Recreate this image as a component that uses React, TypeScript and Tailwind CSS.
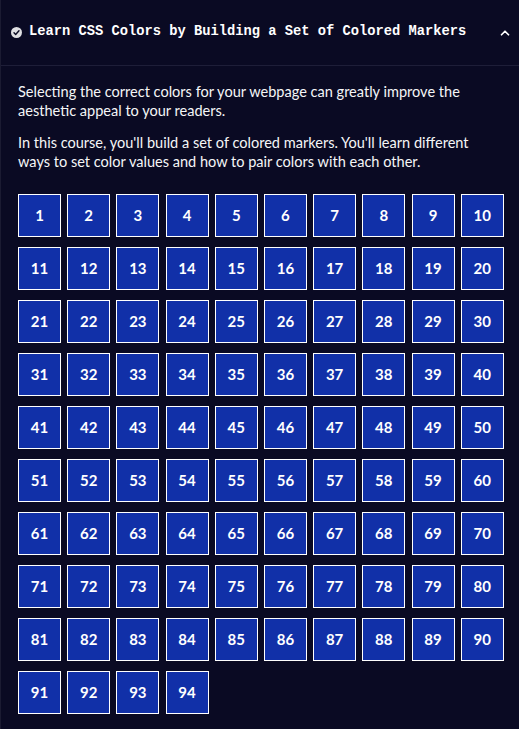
import { ChevronUp } from 'lucide-react'

const steps = Array.from({ length: 94 }, (_, i) => i + 1)

function CheckCircle() {
  return (
    <svg width="11" height="11" viewBox="0 0 20 20" className="shrink-0">
      <circle cx="10" cy="10" r="10" fill="#dfdfe2" />
      <path d="M5.5 10.5l3 3 6-6.5" fill="none" stroke="#0a0a23" strokeWidth="2.6" strokeLinecap="round" strokeLinejoin="round" />
    </svg>
  )
}

export default function App() {
  return (
    <div className="bg-[#0a0a23] w-[519px] h-[729px] overflow-hidden border-l border-[#1b1b32] text-[#f5f6f7]">
      <div className="h-[66px] flex items-center justify-between pl-[10px] pr-[7px] border-b border-[#1e1e38]">
        <div className="flex items-center gap-[7px]">
          <CheckCircle />
          <span className="font-['Liberation_Mono',monospace] font-bold text-[13.75px] text-white">
            Learn CSS Colors by Building a Set of Colored Markers
          </span>
        </div>
        <ChevronUp className="w-[14px] h-[14px] text-white" strokeWidth={3} />
      </div>

      <div className="pl-[17px] pr-[26px] pt-[17px] font-['Lato',sans-serif] text-[14.55px] leading-[18.5px] text-[#f5f6f7]">
        <p className="mb-[14px]">
          Selecting the correct colors for your webpage can greatly improve the aesthetic appeal to your readers.
        </p>
        <p>
          In this course, you'll build a set of colored markers. You'll learn different ways to set color values and how to pair colors with each other.
        </p>
      </div>

      <div className="pl-[17px] pt-[23px] grid grid-cols-[repeat(10,43px)] gap-x-[6.2px] gap-y-[10px]">
        {steps.map((n) => (
          <div
            key={n}
            className="w-[43px] h-[43px] bg-[#1130a8] border border-white flex items-center justify-center font-['Lato',sans-serif] font-bold text-[15px] text-white"
          >
            {n}
          </div>
        ))}
      </div>
    </div>
  )
}
